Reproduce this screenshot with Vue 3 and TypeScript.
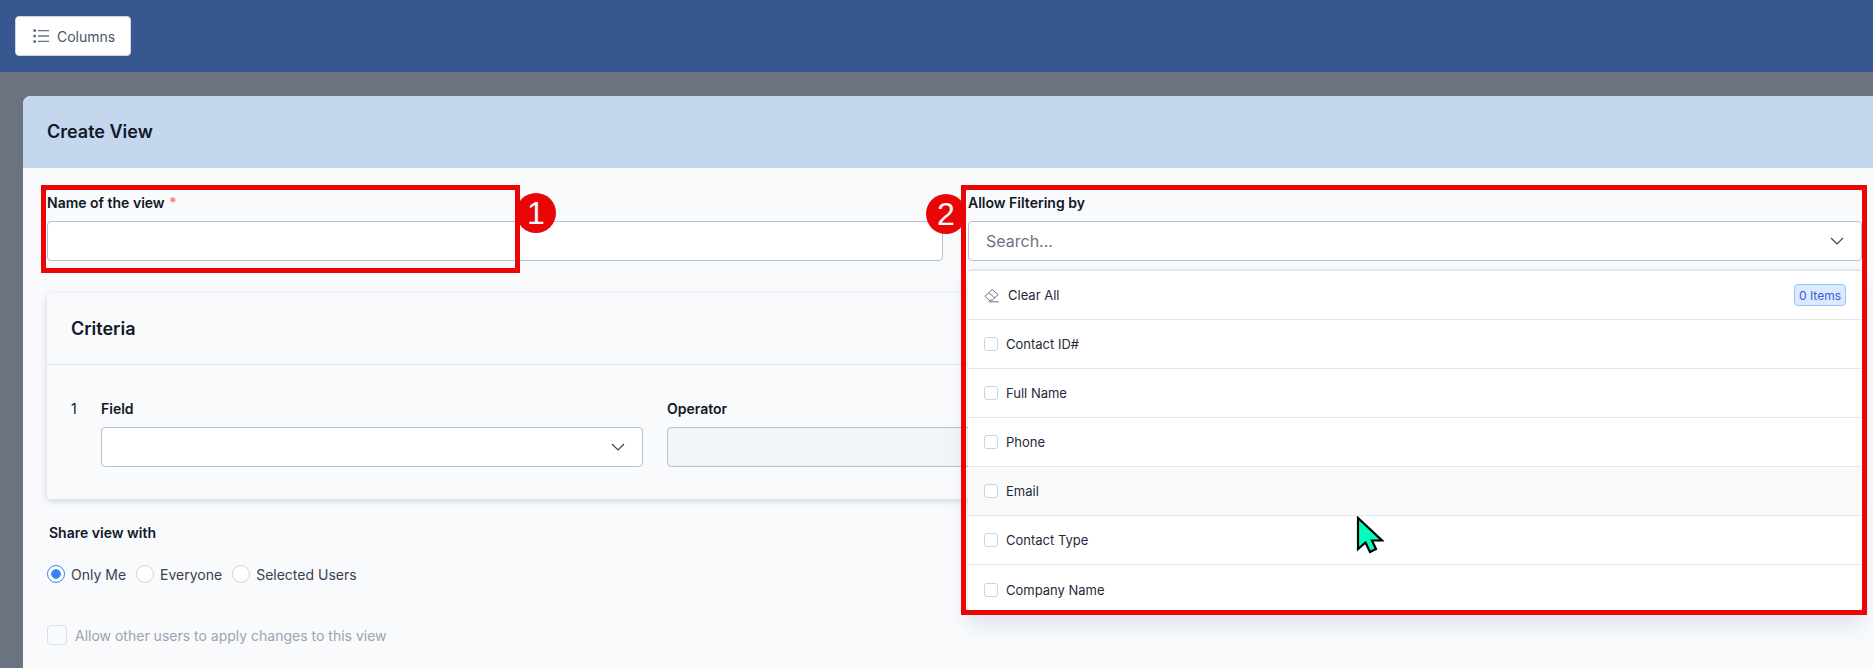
<script setup lang="ts">
const items: string[] = ['Contact ID#', 'Full Name', 'Phone', 'Email', 'Contact Type', 'Company Name']
const shares: { label: string; on: boolean }[] = [
  { label: 'Only Me', on: true },
  { label: 'Everyone', on: false },
  { label: 'Selected Users', on: false },
]
</script>

<template>
  <div class="page">
    <header class="topbar">
      <button class="columns-btn" type="button">
        <svg class="list-icon" width="16" height="14" viewBox="0 0 16 14" fill="none" stroke="#64748b" stroke-width="1.3">
          <path d="M5 1.6h11M5 7h11M5 12.4h11" />
          <circle cx="1.6" cy="1.6" r="1.5" fill="#64748b" stroke="none" />
          <circle cx="1.6" cy="7" r="1.5" fill="#64748b" stroke="none" />
          <circle cx="1.6" cy="12.4" r="1.5" fill="#64748b" stroke="none" />
        </svg>
        <span>Columns</span>
      </button>
    </header>

    <main class="overlay">
      <section class="modal">
        <div class="modal-head">Create View</div>
        <div class="modal-body">
          <div class="top-grid">
            <div class="field">
              <label class="label">Name of the view <span class="req">*</span></label>
              <div class="input"></div>
            </div>
            <div class="field filter">
              <label class="label">Allow Filtering by</label>
              <div class="input search">
                <span>Search...</span>
                <svg class="chev" width="16" height="10" viewBox="0 0 16 10" fill="none" stroke="#374151" stroke-width="1.1">
                  <path d="M2 2l6 6 6-6" />
                </svg>
              </div>
              <div class="menu">
                <div class="menu-row menu-head">
                  <svg class="eraser" width="16" height="16" viewBox="0 0 16 16" fill="none" stroke="#64748b" stroke-width="1">
                    <path d="M1 9.2 8.2 2.6l6 5-6 5.6H5z" />
                    <path d="M4.8 5.8 10.8 10.8" />
                    <path d="M4.6 14.8h10" />
                  </svg>
                  <span>Clear All</span>
                  <span class="count">0 Items</span>
                </div>
                <div v-for="item in items" :key="item" class="menu-row" :class="{ hover: item === 'Email' }">
                  <span class="check"></span>
                  <span>{{ item }}</span>
                </div>
              </div>
            </div>
          </div>

          <div class="criteria">
            <h3 class="criteria-head">Criteria</h3>
            <div class="criteria-row">
              <span class="num">1</span>
              <div class="crit-field">
                <label class="label">Field</label>
                <div class="input select">
                  <svg class="chev" width="16" height="10" viewBox="0 0 16 10" fill="none" stroke="#374151" stroke-width="1.1">
                    <path d="M2 2l6 6 6-6" />
                  </svg>
                </div>
              </div>
              <div class="crit-field">
                <label class="label">Operator</label>
                <div class="input disabled"></div>
              </div>
            </div>
          </div>

          <div class="label share-title">Share view with</div>
          <div class="radios">
            <label v-for="s in shares" :key="s.label" class="radio-item">
              <span class="radio" :class="{ on: s.on }"></span>
              <span>{{ s.label }}</span>
            </label>
          </div>
          <label class="allow">
            <span class="allow-box"></span>
            <span>Allow other users to apply changes to this view</span>
          </label>
        </div>
      </section>
    </main>

    <div class="mark mark-one"></div>
    <div class="mark mark-two"></div>
    <div class="dot dot-one">1</div>
    <div class="dot dot-two">2</div>

    <svg class="cursor" width="28" height="38" viewBox="0 0 28 38">
      <path d="M2 2 L2 33 L9.5 26.5 L14 36 L20 33 L16 24.5 L26 24.5 Z" fill="#00ffbf" stroke="#000" stroke-width="2.2" stroke-linejoin="miter" />
    </svg>
  </div>
</template>

<style>
html, body { margin: 0; background: #6b7280; }
</style>

<style scoped>
.page {
  position: relative;
  width: 1873px;
  height: 668px;
  overflow: hidden;
  background: #6b7280;
  font-family: Inter, "Noto Sans", sans-serif;
  color: #111827;
  font-size: 14px;
}
.topbar {
  height: 72px;
  box-sizing: border-box;
  padding: 16px 15px;
  background: #36578f;
}
.columns-btn {
  display: flex;
  align-items: center;
  gap: 8px;
  width: 116px;
  height: 40px;
  padding: 0 0 0 17px;
  box-sizing: border-box;
  border: 1px solid #d1d5db;
  border-radius: 4px;
  background: #fff;
  color: #475569;
  font: 400 14px Inter, sans-serif;
}
.list-icon { flex: none; }
.overlay {
  padding: 24px 0 0 23px;
}
.modal {
  border-radius: 8px 0 0 0;
  overflow: visible;
  background: #f8fafc;
  height: 572px;
}
.modal-head {
  height: 72px;
  box-sizing: border-box;
  padding: 0 0 2px 24px;
  display: flex;
  align-items: center;
  background: #c5d6ef;
  border-radius: 8px 0 0 0;
  font-size: 18px;
  font-weight: 600;
}
.modal-body {
  padding: 26px 11px 0 24px;
}
.top-grid {
  display: grid;
  grid-template-columns: 896px 894px;
  gap: 25px;
}
.field { position: relative; }
.label {
  display: block;
  font-size: 14px;
  line-height: 18px;
  font-weight: 600;
  color: #111827;
  margin-bottom: 9px;
}
.req { color: #f87171; font-weight: 500; margin-left: 1px; }
.input {
  height: 40px;
  box-sizing: border-box;
  background: #fff;
  border: 1px solid #b4c0d3;
  border-radius: 4px;
  display: flex;
  align-items: center;
  justify-content: space-between;
}
.search {
  padding: 0 16px 0 17px;
  font-size: 16px;
  color: #6b7280;
}
.select { justify-content: flex-end; padding-right: 16px; }
.chev { flex: none; }
.disabled { background: #f1f5f9; }
.menu {
  position: absolute;
  z-index: 2;
  left: 0;
  right: 0;
  top: 75px;
  background: #fff;
  border-top: 2px solid #e2e8f0;
  border-radius: 4px;
  box-shadow: 0 10px 20px rgba(100, 116, 139, 0.18);
}
.menu-row {
  height: 49px;
  box-sizing: border-box;
  display: flex;
  align-items: center;
  gap: 8px;
  padding: 0 16px;
  border-bottom: 1px solid #e2e8f0;
  font-size: 13px;
  color: #1f2937;
}
.menu-row:last-child { border-bottom: 0; }
.menu-head { gap: 8px; }
.menu-row.hover { background: #fafafa; }
.eraser { flex: none; }
.count {
  margin-left: auto;
  height: 22px;
  box-sizing: border-box;
  display: flex;
  align-items: center;
  padding: 0 4px;
  border: 1px solid #93c5fd;
  border-radius: 4px;
  background: #dbeafe;
  color: #3b5bdb;
  font-size: 12px;
}
.check {
  width: 14px;
  height: 14px;
  box-sizing: border-box;
  flex: none;
  background: #fff;
  border: 1px solid #cbd5e1;
  border-radius: 3px;
}
.criteria {
  margin-top: 32px;
  height: 206px;
  box-sizing: border-box;
  background: #f8fafc;
  border-radius: 4px;
  box-shadow: 0 2px 6px rgba(100, 116, 139, 0.28);
}
.criteria-head {
  margin: 0;
  height: 72px;
  box-sizing: border-box;
  padding-left: 24px;
  display: flex;
  align-items: center;
  border-bottom: 1px solid #e2e8f0;
  font-size: 18px;
  font-weight: 600;
}
.criteria-row {
  display: grid;
  grid-template-columns: 6px 542px 542px;
  column-gap: 24px;
  padding: 35px 0 0 24px;
}
.num { line-height: 18px; }
.share-title { margin: 25px 0 0 2px; }
.radios {
  display: flex;
  gap: 10px;
  margin-top: 22px;
  height: 20px;
  align-items: center;
}
.radio-item {
  display: flex;
  align-items: center;
  gap: 6px;
  color: #374151;
}
.radio {
  width: 18px;
  height: 18px;
  box-sizing: border-box;
  border: 1px solid #cbd5e1;
  border-radius: 50%;
  background: #fff;
}
.radio.on {
  border: 1.5px solid #3b82f6;
  background: radial-gradient(circle, #3b82f6 0 4.5px, #fff 5px);
}
.allow {
  display: flex;
  align-items: center;
  gap: 8px;
  margin-top: 41px;
  color: #9ca3af;
}
.allow-box {
  width: 20px;
  height: 20px;
  box-sizing: border-box;
  border: 1px solid #d8dee8;
  border-radius: 4px;
  background: #f8fafc;
}
.mark {
  position: absolute;
  z-index: 3;
  box-sizing: border-box;
  border: 5px solid #ea0606;
}
.mark-one { left: 41px; top: 185px; width: 479px; height: 88px; }
.mark-two { left: 961px; top: 185px; width: 906px; height: 430px; }
.dot {
  position: absolute;
  z-index: 4;
  width: 40px;
  height: 40px;
  border-radius: 50%;
  background: #ea0606;
  color: #fff;
  display: flex;
  align-items: center;
  justify-content: center;
  font: 400 32px "Liberation Sans", sans-serif;
}
.dot-one { left: 516px; top: 193px; }
.dot-two { left: 926px; top: 194px; }
.cursor {
  position: absolute;
  z-index: 5;
  left: 1356px;
  top: 516px;
}
</style>
